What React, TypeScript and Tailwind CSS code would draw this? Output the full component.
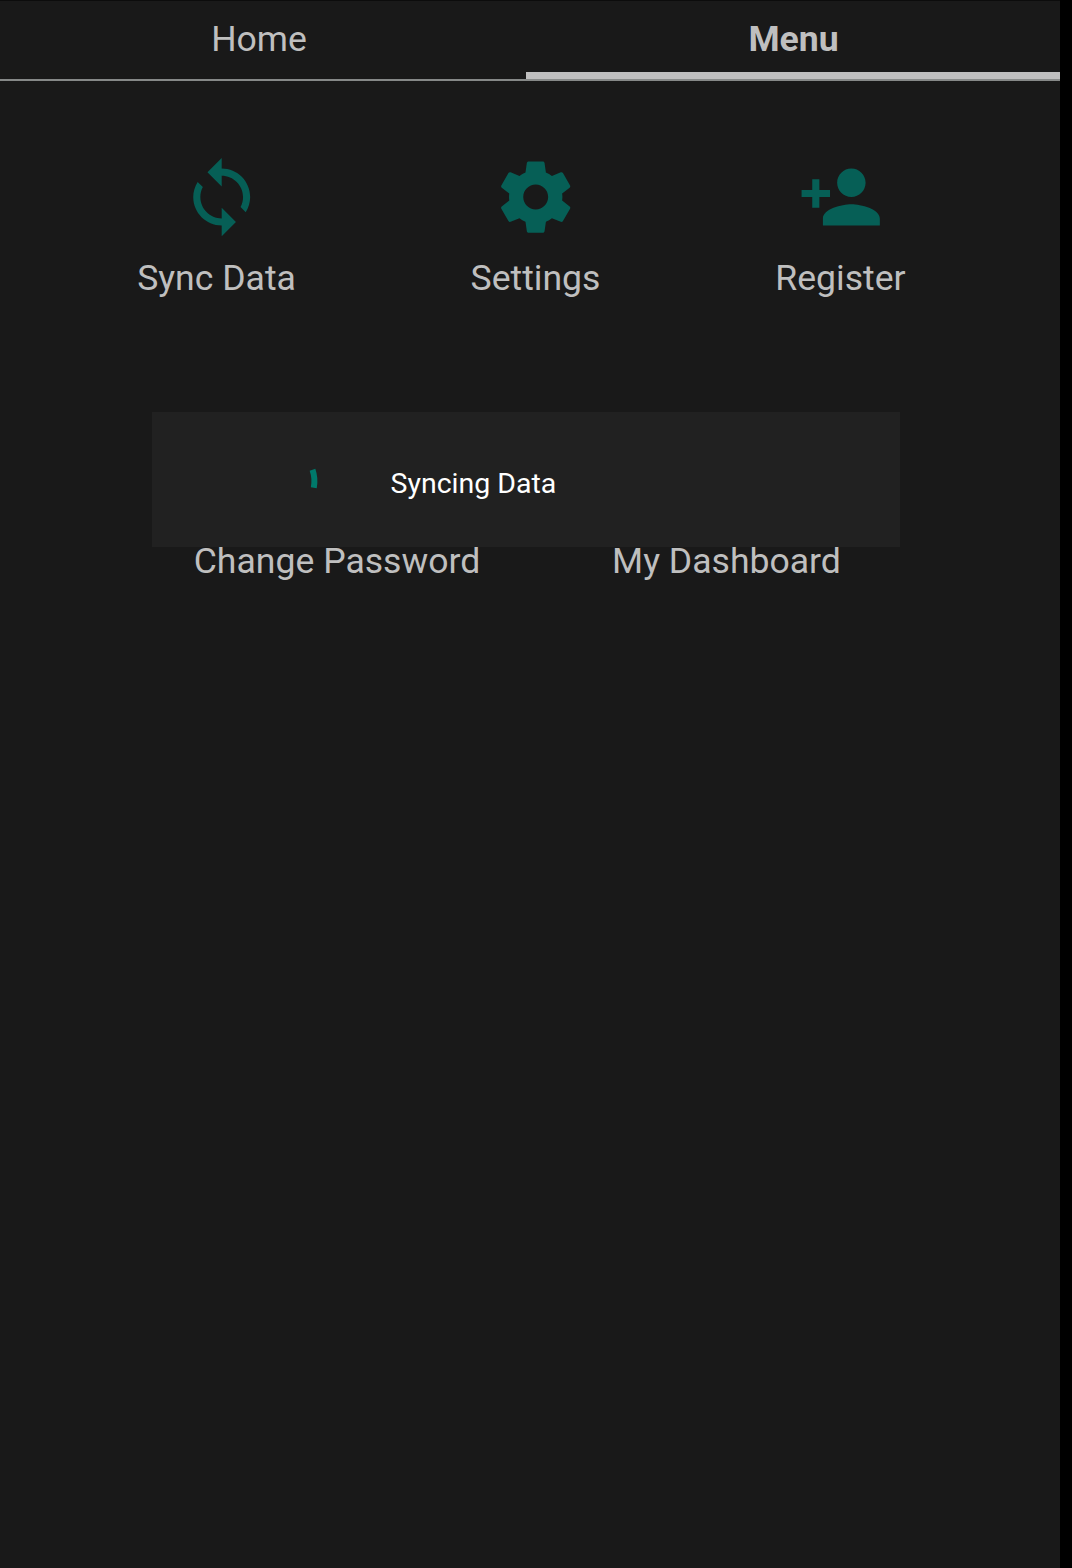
import React from "react";

const LABEL = "whitespace-nowrap text-[35.6px] leading-[42px] text-[#bfbfbf]";

function Item({ text, path, className, iconClass = "" }: { text: string; path: string; className: string; iconClass?: string }) {
  return (
    <button className={`flex flex-col items-center gap-[18px] ${className}`}>
      <svg viewBox="0 -0.1 24 24" className={`h-[85.4px] w-[85.4px] shrink-0 fill-[#065f56] ${iconClass}`}>
        <path d={path} />
      </svg>
      <span className={LABEL}>{text}</span>
    </button>
  );
}

const SYNC =
  "M12 4V1L8 5l4 4V6c3.31 0 6 2.69 6 6 0 1.01-.25 1.97-.7 2.8l1.46 1.46C19.54 15.03 20 13.57 20 12c0-4.42-3.58-8-8-8zm0 14c-3.31 0-6-2.69-6-6 0-1.01.25-1.97.7-2.8L5.24 7.74C4.46 8.97 4 10.43 4 12c0 4.42 3.58 8 8 8v3l4-4-4-4v3z";
const SETTINGS =
  "M19.43 12.98c.04-.32.07-.64.07-.98s-.03-.66-.07-.98l2.11-1.65c.19-.15.24-.42.12-.64l-2-3.46c-.12-.22-.39-.3-.61-.22l-2.49 1c-.52-.4-1.08-.73-1.69-.98l-.38-2.65C14.46 2.18 14.25 2 14 2h-4c-.25 0-.46.18-.49.42l-.38 2.65c-.61.25-1.17.59-1.69.98l-2.49-1c-.23-.09-.49 0-.61.22l-2 3.46c-.13.22-.07.49.12.64l2.11 1.65c-.04.32-.07.65-.07.98s.03.66.07.98l-2.11 1.65c-.19.15-.24.42-.12.64l2 3.46c.12.22.39.3.61.22l2.49-1c.52.4 1.08.73 1.69.98l.38 2.65c.03.24.24.42.49.42h4c.25 0 .46-.18.49-.42l.38-2.65c.61-.25 1.17-.59 1.69-.98l2.49 1c.23.09.49 0 .61-.22l2-3.46c.12-.22.07-.49-.12-.64l-2.11-1.65zM12 15.5c-1.93 0-3.5-1.57-3.5-3.5s1.57-3.5 3.5-3.5 3.5 1.57 3.5 3.5-1.57 3.5-3.5 3.5z";
const REGISTER =
  "M15 12c2.21 0 4-1.79 4-4s-1.79-4-4-4-4 1.79-4 4 1.79 4 4 4zm-9-2V7H4v3H1v2h3v3h2v-3h3v-2H6zm9 4c-2.67 0-8 1.34-8 4v2h16v-2c0-2.66-5.33-4-8-4z";

export default function App() {
  return (
    <div className="h-[1568px] w-[1072px] overflow-hidden bg-black font-['Roboto',sans-serif]">
      <div className="relative h-full w-[1060px] border-t border-[#0c0c0c] bg-[#191919]">
        <nav className="flex h-20 border-b-2 border-[#868988]">
          <button className="w-[526px] pr-2 text-[35.6px] text-[#bfbfbf]">Home</button>
          <button className="w-[534px] border-b-[7px] border-[#bfbfbf] pt-[7px] pl-px text-[35.6px] font-bold text-[#bfbfbf]">Menu</button>
        </nav>
        <div className="flex pt-[73px]">
          <Item text="Sync Data" path={SYNC} className="ml-[137px] w-[159px]" iconClass="ml-[10px]" />
          <Item text="Settings" path={SETTINGS} className="ml-[175px] w-[129px]" />
          <Item text="Register" path={REGISTER} className="ml-[176px] w-[129px]" />
        </div>
        <div className="mt-[241px] flex">
          <button className={`ml-[193px] flex w-[288px] justify-center ${LABEL}`}>Change Password</button>
          <button className={`ml-[130px] flex w-[231px] justify-center ${LABEL}`}>My Dashboard</button>
        </div>
        <div role="dialog" className="absolute top-[411px] left-[152px] flex h-[135px] w-[748px] items-center bg-[#212121]">
          <svg viewBox="0 0 80 80" className="ml-[96px] h-20 w-20 fill-none stroke-[#00796b] stroke-[6]">
            <path d="M64.500 29.800Q67.500 38.300 65.800 47.700" />
          </svg>
          <span className="ml-[62.5px] pt-[10px] text-[28.5px] whitespace-nowrap text-white">Syncing Data</span>
        </div>
      </div>
    </div>
  );
}
